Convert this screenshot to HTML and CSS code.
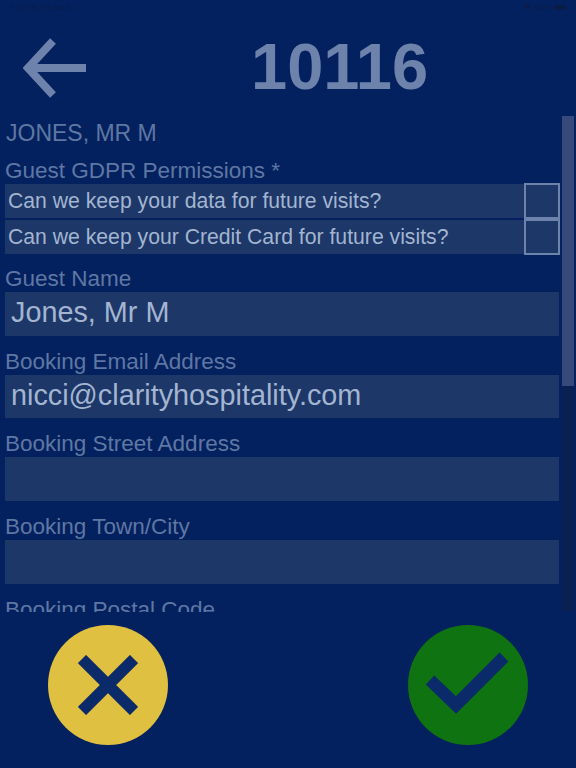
FILE: index.html
```html
<!DOCTYPE html>
<html lang="en">
<head>
    <meta charset="UTF-8">
    <title>10116</title>
    <link rel="stylesheet" href="styles.css">
</head>
<body>
    <div id="page">
        <div class="status">
            <span>2:31 PM&nbsp;&nbsp;Fri Jan 8</span>
            <span class="status-right">
                <svg width="8" height="6" viewBox="0 0 10 8"><path d="M0 2.5 A7 7 0 0 1 10 2.5 L5 8 Z" fill="#0a1c48"/></svg>
                <span>100%</span>
                <span class="battery"></span>
            </span>
        </div>
        <div class="header">
            <svg class="back" width="64" height="64" viewBox="0 0 64 64">
                <path d="M30 5 L5 32 L30 59 M5 32 L63 32" fill="none" stroke="#6d83ab" stroke-width="8"/>
            </svg>
            <div class="room">10116</div>
        </div>
        <div class="middle">
            <div class="form">
                <div class="guest">JONES, MR M</div>
                <div class="label gdpr">Guest GDPR Permissions *</div>
                <div class="perm">
                    <div class="perm-text">Can we keep your data for future visits?</div>
                    <div class="check"></div>
                </div>
                <div class="perm">
                    <div class="perm-text">Can we keep your Credit Card for future visits?</div>
                    <div class="check"></div>
                </div>
                <div class="label first">Guest Name</div>
                <div class="input">Jones, Mr M</div>
                <div class="label">Booking Email Address</div>
                <div class="input">nicci@clarityhospitality.com</div>
                <div class="label">Booking Street Address</div>
                <div class="input"></div>
                <div class="label">Booking Town/City</div>
                <div class="input"></div>
                <div class="label">Booking Postal Code</div>
                <div class="input"></div>
            </div>
            <div class="track"><div class="thumb"></div></div>
        </div>
        <div class="footer">
            <div class="round cancel">
                <svg width="60" height="60" viewBox="0 0 60 60">
                    <path d="M4 4 L56 56 M56 4 L4 56" fill="none" stroke="#0b2a6a" stroke-width="11.5"/>
                </svg>
            </div>
            <div class="round ok">
                <svg width="84" height="66" viewBox="0 0 84 66">
                    <path d="M4 28 L30 53 L78 5" fill="none" stroke="#0b2a6a" stroke-width="12.5"/>
                </svg>
            </div>
        </div>
    </div>
</body>
</html>
```

FILE: styles.css
```css
body{
    margin: 0;
    background: #03215f;
    font-family: "Liberation Sans", Arial, sans-serif;
}

#page{
    width: 576px;
    height: 768px;
    display: flex;
    flex-direction: column;
    overflow: hidden;
}

.status{
    height: 14px;
    padding: 0 10px 0 10px;
    display: flex;
    justify-content: space-between;
    align-items: center;
    font-size: 7.5px;
    color: #0a1c48;
}
.status-right{
    display: flex;
    align-items: center;
    gap: 2px;
}
.battery{
    width: 12px;
    height: 5px;
    background: #0a1c48;
    border-radius: 1px;
}

.header{
    height: 102px;
    display: flex;
    align-items: center;
    padding-left: 23px;
    flex-shrink: 0;
}
.back{
    display: block;
    margin-top: 5px;
}
.room{
    margin-left: 164px;
    margin-top: 2px;
    font-size: 65px;
    font-weight: bold;
    color: #6d83ab;
}

.middle{
    height: 496px;
    display: flex;
    overflow: hidden;
    flex-shrink: 0;
}
.form{
    width: 562px;
    padding-left: 5px;
    box-sizing: border-box;
}
.guest{
    font-size: 23px;
    line-height: 24px;
    margin: 5px 0 0 1px;
    color: #5f77a3;
}
.label{
    font-size: 22.5px;
    line-height: 25px;
    margin-top: 13px;
    margin-bottom: 1px;
    color: #5f77a3;
}
.gdpr{
    margin-top: 13px;
    margin-bottom: 1px;
}
.label.first{
    margin-top: 12px;
}

.perm{
    height: 34px;
    width: 555px;
    margin-bottom: 2px;
    display: flex;
}
.perm-text{
    width: 519px;
    padding-left: 3px;
    box-sizing: border-box;
    background: #1c3768;
    font-size: 21.2px;
    line-height: 34px;
    color: #a3b5d0;
}
.check{
    width: 36px;
    height: 36px;
    box-sizing: border-box;
    border: 2px solid #6d83ab;
    background: #1c3768;
    margin-top: -1px;
}

.input{
    width: 554px;
    height: 43.67px;
    padding-left: 6px;
    box-sizing: border-box;
    background: #1c3768;
    font-size: 28.8px;
    line-height: 41px;
    color: #a3b5d0;
}

.track{
    width: 12px;
    height: 495px;
    background: #0a2052;
}
.thumb{
    height: 270px;
    background: #37497a;
}

.footer{
    flex: 1;
    display: flex;
    justify-content: space-between;
    align-items: center;
    padding: 0 48px 10px;
}
.round{
    width: 120px;
    height: 120px;
    border-radius: 50%;
    display: flex;
    align-items: center;
    justify-content: center;
}
.cancel{
    background: #e0c040;
}
.ok{
    background: #0f7312;
}
```
